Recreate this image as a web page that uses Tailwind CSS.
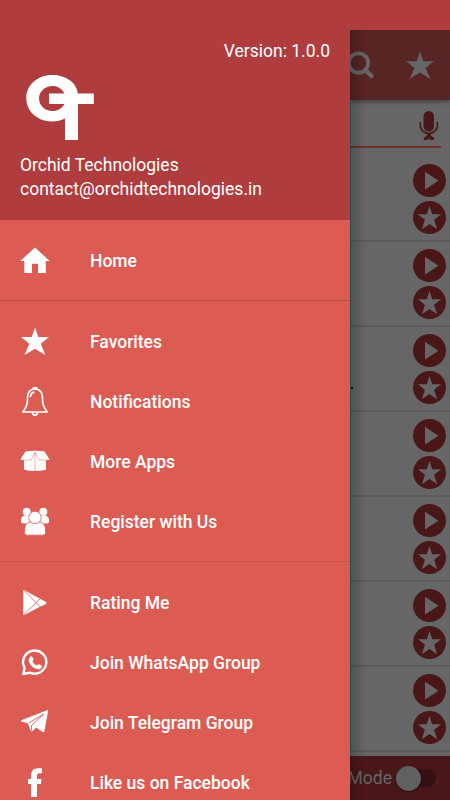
<!DOCTYPE html>
<html lang="en">
<head>
  <meta charset="UTF-8" />
  <title>Orchid Technologies</title>
  <script src="https://cdn.jsdelivr.net/npm/@tailwindcss/browser@4"></script>
</head>
<body class="bg-[#666] font-[Roboto,sans-serif] text-white w-[450px] h-[800px] overflow-hidden">
  <svg class="hidden">
    <symbol id="play" viewBox="0 0 33 33">
      <circle cx="16.5" cy="16.5" r="16.5" fill="#4a1718" />
      <path d="M12 7.800 25.500 16.700 12 25.600z" fill="#666" />
    </symbol>
    <symbol id="fav" viewBox="0 0 33 33">
      <circle cx="16.5" cy="16.5" r="16.5" fill="#4a1718" />
      <path d="M16.500 5l2.700 8.200h8.900l-7 5.500 3 9.500-7.600-5.300-7.600 5.300 3-9.500-7-5.500h8.900z" fill="#666" />
    </symbol>
  </svg>

  <div class="h-[30px] bg-[#b03d3d]"></div>

  <div class="flex h-[770px]">
    <!-- Drawer -->
    <aside class="w-[350px] shrink-0 bg-[#dc5c53] overflow-hidden">
      <div class="h-[190px] bg-[#b03d3d] px-5 pt-[9px]">
        <p class="text-right text-[17.5px] leading-6">Version: 1.0.0</p>
        <svg class="w-[80px] h-[80px] mt-[3px]" viewBox="20 66 80 80" fill="#fff">
          <path fill-rule="evenodd" d="M52 75c14 0 25 8 25.800 18.500H93.800v10.500H78V140H65v-21.500C61 120.500 57 121.500 52 121.500 37.500 121.500 26.300 111.500 26.300 98.300S37.500 75 52 75zM64.500 93.500C62 88.500 57.500 86 52.500 86 45 86 39 91.500 39 98.500S45 111 52.500 111c5 0 9.500-2.500 12-7H49V93.500z" />
        </svg>
        <p class="text-[17.5px] leading-6 mt-[7px]">Orchid Technologies</p>
        <p class="text-[17.5px] leading-6">contact@orchidtechnologies.in</p>
      </div>

      <nav class="text-[17.5px] font-medium">
        <div class="pt-[11px] pb-[9px] border-b border-[#b94e49]">
          <a class="flex items-center h-[60px] px-5 gap-10">
            <svg class="w-[30px] h-[30px]" viewBox="0 0 30 30" fill="#fff"><path d="M15 1.500 29.700 15H25.800V27H18V17.700H12V27H4.300V15H.3z" /></svg>
            <span class="pt-px">Home</span>
          </a>
        </div>
        <div class="pt-[11px] pb-[9px] border-b border-[#c9544d]">
          <a class="flex items-center h-[60px] px-5 gap-10">
            <svg class="w-[30px] h-[30px]" viewBox="0 0 30 30" fill="#fff"><path d="M15 .6l3.300 9.300h10.700l-8.300 6.900 4.700 11.300L15 21.800 4.600 28.100l4.700-11.300L1 9.900h10.700z" /></svg>
            <span class="pt-px">Favorites</span>
          </a>
          <a class="flex items-center h-[60px] px-5 gap-10">
            <svg class="w-[30px] h-[30px]" viewBox="0 0 30 30" fill="none" stroke="#fff" stroke-width="1.700" stroke-linejoin="round" stroke-linecap="round">
              <path d="M15 1.800c-4.500 0-7.400 3.500-7.400 8.200 0 7-1 10-4.800 15h24.400C23.400 20 22.400 17 22.400 10c0-4.700-2.900-8.200-7.400-8.200z" />
              <path d="M10.500 9.500c.2-2.300 1.500-3.900 3.300-4.400M13.300 1.300c.3-1.300 3.100-1.300 3.400 0M12.500 25.800c0 3 5 3 5 0" />
            </svg>
            <span class="pt-px">Notifications</span>
          </a>
          <a class="flex items-center h-[60px] px-5 gap-10">
            <svg class="w-[30px] h-[30px]" viewBox="0 0 30 30">
              <path fill="#fff" d="M5.500 4.500Q15 3 24.500 4.500L29.700 12.500 26 13.300V22.800Q15 25.200 4 22.800V13.300L.4 12.500z" />
              <path fill="none" stroke="#dc5c53" stroke-opacity=".75" stroke-width=".6" d="M4 13.300l7.200-.5L15 5l3.800 7.800 7.200.5M15 5v19" />
            </svg>
            <span class="pt-px">More Apps</span>
          </a>
          <a class="flex items-center h-[60px] px-5 gap-10">
            <svg class="w-[30px] h-[30px]" viewBox="0 0 30 30" fill="#fff">
              <circle cx="6.700" cy="4.800" r="4" />
              <circle cx="23.300" cy="4.800" r="4" />
              <path d="M4.500 8.500H10V14.500L7.500 16.500H3Q1 16.500 1 14.500V13Q1 9.500 4.500 8.500zM25.500 8.500H20V14.500L22.500 16.500H27Q29 16.500 29 14.500V13Q29 9.500 25.500 8.500z" />
              <g stroke="#dc5c53" stroke-width=".8">
                <path d="M10 15Q4.500 16.500 4.500 23v2.500Q4.500 28.200 7 28.200H23Q25.500 28.200 25.500 25.500V23Q25.500 16.500 20 15z" />
                <circle cx="15" cy="10.500" r="6.200" />
              </g>
            </svg>
            <span class="pt-px">Register with Us</span>
          </a>
        </div>
        <div class="pt-[11px]">
          <a class="flex items-center h-[60px] px-5 gap-10">
            <svg class="w-[30px] h-[30px]" viewBox="0 0 30 30">
              <path fill="#fff" d="M3.200 3Q3.200 1.700 4.600 2.200L19 10.200 26 14Q27.300 15 26 16L19 19.200 4.600 26.800Q3.200 27.300 3.200 26z" />
              <path fill="none" stroke="#dc5c53" stroke-width=".8" d="M4 2.500 20.500 19M4 26.500 20.500 10.500" />
            </svg>
            <span class="pt-px">Rating Me</span>
          </a>
          <a class="flex items-center h-[60px] px-5 gap-10">
            <svg class="w-[30px] h-[30px]" viewBox="0 0 30 30">
              <path fill="none" stroke="#fff" stroke-width="2.400" stroke-linejoin="round" d="M3.300 26l1.300-6.200A11.600 11.600 0 1 1 9.800 24.600z" />
              <path fill="#fff" d="M10.300 8.800c.8-.9 1.800-.7 2.200.2l.9 2.200c.3.700-.1 1.200-1 2.100 1.200 2.200 2.600 3.400 4.700 4.300.8-.8 1.200-1.600 1.900-1.300l2.400 1.200c.7.400.4 1.600-.1 2.400-1.100 1.500-3.200 1.600-5 .9-3.500-1.300-5.700-3.500-7.200-6.300-.9-1.900-.5-4.300 1.200-5.700z" />
            </svg>
            <span class="pt-px">Join WhatsApp Group</span>
          </a>
          <a class="flex items-center h-[60px] px-5 gap-10">
            <svg class="w-[30px] h-[30px]" viewBox="0 0 30 30">
              <path fill="#fff" d="M1.200 12.300 27 2.200Q28.300 1.900 28.100 3.200L24.400 23.300Q24 24.600 22.800 23.900L16.200 19.400 12.200 23.300Q11.300 24 10.700 23L8 15.500 1.500 13.500Q.5 13 1.200 12.300z" />
              <path fill="none" stroke="#dc5c53" stroke-width=".9" d="M8.600 15.200 23.800 6 11.600 17.300 11.300 23.200" />
            </svg>
            <span class="pt-px">Join Telegram Group</span>
          </a>
          <a class="flex items-center h-[60px] px-5 gap-10">
            <svg class="w-[30px] h-[30px]" viewBox="0 0 30 30" fill="#fff"><path d="M11 29V16H8V11h3V8C11 3 13.300.3 18 .3h4v5H19.500C17.600 5.300 17 6.200 17 8v3h4.500l-.6 5H17V29z" /></svg>
            <span class="pt-px">Like us on Facebook</span>
          </a>
        </div>
      </nav>
    </aside>

    <!-- Dimmed page behind the drawer -->
    <main class="relative w-[100px] overflow-hidden">
      <div class="h-[70px] bg-[#572524] shadow-[0_2px_4px_rgba(0,0,0,0.35)]">
        <svg class="w-[100px] h-[70px]" viewBox="350 30 100 70">
          <circle cx="358.500" cy="63" r="9.700" fill="none" stroke="#666" stroke-width="3.800" />
          <path d="M365.500 70l6 6" stroke="#666" stroke-width="4.400" stroke-linecap="round" />
          <path fill="#666" d="M420 51.500l3.400 9.700h10.400l-8.300 6.700 4.900 11L420 72.500 409.600 78.900l4.900-11-8.300-6.700h10.400z" />
        </svg>
      </div>
      <div class="h-[57px] pt-[11px]">
        <div class="w-[91px] h-[37px] border-b-2 border-[#6f302d]">
          <svg class="w-5 h-[30px] ml-[69px]" viewBox="0 0 20 30">
            <rect x="4.500" y="0" width="10.500" height="20.500" rx="5.200" fill="#4a1718" />
            <path fill="none" stroke="#4a1718" stroke-width="1.600" d="M1.300 11v3.500a8.500 8 0 0 0 17 0V11" />
            <path fill="#4a1718" d="M8 22h4v2.500l3 2.500v2h-3.500L9.900 27.500 8.300 29H4.800V27L8 24.500z" />
          </svg>
        </div>
      </div>

      <div class="flex flex-col items-end gap-1 h-[85px] pt-[6.5px] pr-1 border-b-2 border-[#5b5b5b]">
        <svg class="w-[33px] h-[33px] shrink-0"><use href="#play" /></svg>
        <svg class="w-[33px] h-[33px] shrink-0"><use href="#fav" /></svg>
      </div>
      <div class="flex flex-col items-end gap-1 h-[85px] pt-[6.5px] pr-1 border-b-2 border-[#5b5b5b]">
        <svg class="w-[33px] h-[33px] shrink-0"><use href="#play" /></svg>
        <svg class="w-[33px] h-[33px] shrink-0"><use href="#fav" /></svg>
      </div>
      <div class="relative flex flex-col items-end gap-1 h-[85px] pt-[6.5px] pr-1 border-b-2 border-[#5b5b5b]">
        <span class="absolute left-0 top-[60px] w-[3px] h-[2px] bg-black"></span>
        <svg class="w-[33px] h-[33px] shrink-0"><use href="#play" /></svg>
        <svg class="w-[33px] h-[33px] shrink-0"><use href="#fav" /></svg>
      </div>
      <div class="flex flex-col items-end gap-1 h-[85px] pt-[6.5px] pr-1 border-b-2 border-[#5b5b5b]">
        <svg class="w-[33px] h-[33px] shrink-0"><use href="#play" /></svg>
        <svg class="w-[33px] h-[33px] shrink-0"><use href="#fav" /></svg>
      </div>
      <div class="flex flex-col items-end gap-1 h-[85px] pt-[6.5px] pr-1 border-b-2 border-[#5b5b5b]">
        <svg class="w-[33px] h-[33px] shrink-0"><use href="#play" /></svg>
        <svg class="w-[33px] h-[33px] shrink-0"><use href="#fav" /></svg>
      </div>
      <div class="flex flex-col items-end gap-1 h-[85px] pt-[6.5px] pr-1 border-b-2 border-[#5b5b5b]">
        <svg class="w-[33px] h-[33px] shrink-0"><use href="#play" /></svg>
        <svg class="w-[33px] h-[33px] shrink-0"><use href="#fav" /></svg>
      </div>
      <div class="flex flex-col items-end gap-1 h-[85px] pt-[6.5px] pr-1 border-b-2 border-[#5b5b5b]">
        <svg class="w-[33px] h-[33px] shrink-0"><use href="#play" /></svg>
        <svg class="w-[33px] h-[33px] shrink-0"><use href="#fav" /></svg>
      </div>

      <div class="flex items-center justify-end h-[44px] mt-1 pr-[14px] bg-[#4a1718]">
        <span class="text-[17.5px] text-[#666] mr-1 pt-px">Mode</span>
        <div class="flex items-center w-10 h-[25px]">
          <div class="w-[25px] h-[25px] rounded-full bg-[#606060] shadow-[0_1px_2px_rgba(0,0,0,0.5)] shrink-0 z-10"></div>
          <div class="w-[27px] h-[18px] -ml-3 rounded-r-full bg-[#341012] shrink-0"></div>
        </div>
      </div>

      <!-- drawer edge shadow -->
      <div class="absolute inset-y-0 left-0 w-4 z-20 bg-linear-to-r from-black/20 to-transparent"></div>
      <div class="absolute top-[70px] bottom-[44px] left-0 w-px z-20 bg-[#1c5553]"></div>
    </main>
  </div>
</body>
</html>
